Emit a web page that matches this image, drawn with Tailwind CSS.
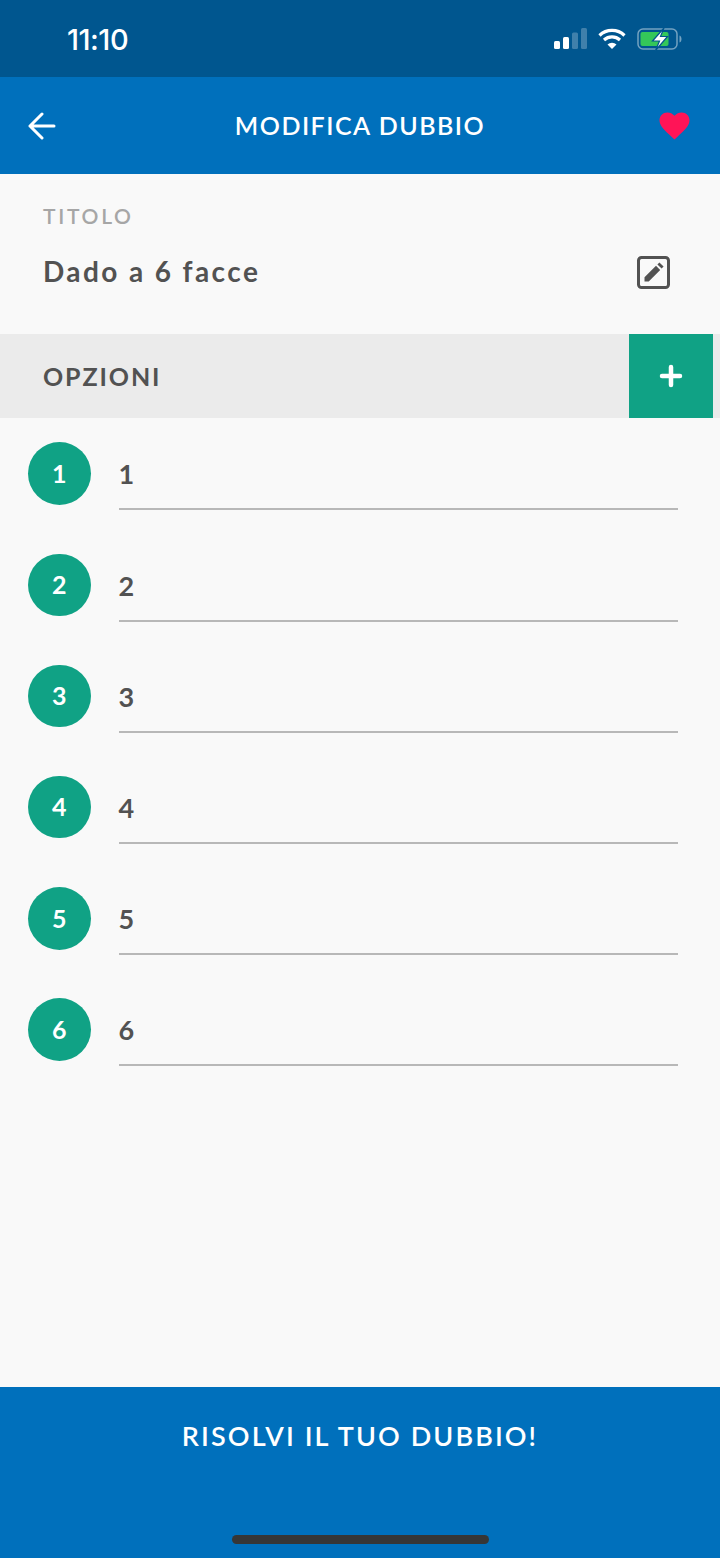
<!DOCTYPE html>
<html lang="it">
<head>
  <meta charset="UTF-8">
  <title>Modifica dubbio</title>
  <script src="https://cdn.jsdelivr.net/npm/@tailwindcss/browser@4"></script>
</head>
<body class="bg-[#f9f9f9] font-['Lato',sans-serif]">
  <div class="w-[720px] h-[1558px] flex flex-col overflow-hidden">

    <!-- status bar -->
    <div class="h-[77px] bg-[#00568f] flex items-center justify-between pl-[67px] pr-[37px] text-white">
      <span class="mt-[2px] text-[29px] font-['Inter',sans-serif] font-medium tracking-[-0.5px] leading-none">11:10</span>
      <div class="flex items-center gap-[11px]">
        <svg class="-mt-[1px]" width="33" height="21" viewBox="0 0 33 21">
          <rect x="0" y="13" width="6" height="8" rx="1.500" fill="#fff"/>
          <rect x="9" y="9" width="6" height="12" rx="1.500" fill="#fff"/>
          <rect x="18" y="4.500" width="6" height="16.500" rx="1.500" fill="#fff" fill-opacity=".25"/>
          <rect x="27" y="0" width="6" height="21" rx="1.500" fill="#fff" fill-opacity=".25"/>
        </svg>
        <svg class="-mt-[1px]" width="28" height="21" viewBox="0 0 28 21" fill="none" stroke="#fff" stroke-width="3.200">
          <path d="M1.500 7.500a18 18 0 0 1 25 0"/>
          <path d="M6 12a12 12 0 0 1 16 0"/>
          <path d="M14 21l-4.500-4.500a6.500 6.500 0 0 1 9 0z" fill="#fff" stroke="none"/>
        </svg>
        <svg width="46" height="24" viewBox="0 0 46 24" fill="none">
          <rect x="1" y="2" width="39" height="20" rx="5" stroke="#fff" stroke-opacity=".45" stroke-width="1.500"/>
          <rect x="3.500" y="5" width="28" height="14" rx="2" fill="#34c759"/>
          <path d="M42.500 8.500c1.500.5 2 2 2 3.500s-.5 3-2 3.500z" fill="#fff" fill-opacity=".45"/>
          <path d="M27 1L15.500 14h7l-4 9.500L30.500 9.500h-7z" fill="#fff" stroke="#00568f" stroke-width="1.200"/>
        </svg>
      </div>
    </div>

    <!-- header -->
    <div class="relative h-[97px] bg-[#0070bc] flex items-center justify-between pl-[28px] pr-[30px]">
      <svg width="28" height="28" viewBox="0 0 28 28" fill="none" stroke="#fff" stroke-width="3" stroke-linecap="round" stroke-linejoin="round">
        <path d="M2 14h24M14 2L2 14l12 12"/>
      </svg>
      <h1 class="absolute inset-x-0 text-center text-white text-[25px] font-semibold tracking-[1.500px] leading-none">MODIFICA DUBBIO</h1>
      <svg width="31" height="28" viewBox="0 0 31 28">
        <path d="M15.500 27.500L13.300 25.500C5.400 18.300.500 13.800.500 8.300.500 3.800 4 .500 8.400.500c2.600 0 5.200 1.200 7.100 3.300C17.400 1.700 20 .500 22.600.500c4.400 0 7.900 3.300 7.900 7.800 0 5.500-4.900 10-12.800 17.200z" fill="#ff1457"/>
      </svg>
    </div>

    <!-- titolo -->
    <div class="h-[160px] pl-[43px] pr-[50px] pt-[30px] flex justify-between items-start">
      <div>
        <p class="text-[21px] font-semibold tracking-[2.700px] text-[#a6a6a6] leading-[25px] -mt-[1px]">TITOLO</p>
        <p class="mt-[27px] text-[28px] font-bold tracking-[2.400px] text-[#525252] leading-[32px]">Dado a 6 facce</p>
      </div>
      <svg class="mt-[52px]" width="33" height="33" viewBox="0 0 33 33" fill="none">
        <rect x="1.500" y="1.500" width="30" height="30" rx="3" stroke="#525252" stroke-width="3"/>
        <path d="M7.500 25.500v-4.200L19 9.800l4.200 4.200L11.700 25.500zM20.400 8.400l2-2 4.200 4.200-2 2z" fill="#525252"/>
      </svg>
    </div>

    <!-- opzioni -->
    <div class="h-[84px] bg-[#ebebeb] flex items-center justify-between pl-[43px] pr-[7px]">
      <span class="mt-[2px] text-[25px] font-bold tracking-[1.900px] text-[#525252]">OPZIONI</span>
      <div class="w-[84px] h-[84px] bg-[#10a285] flex items-center justify-center">
        <svg width="24" height="24" viewBox="0 0 24 24" stroke="#fff" stroke-width="4.500" stroke-linecap="round">
          <path d="M12 3v18M3 12h18"/>
        </svg>
      </div>
    </div>

    <!-- lista opzioni -->
    <ul class="flex-1 pt-[24.400px] pl-[28px] pr-[42px]">
      <li class="h-[111.2px] flex gap-[28px]">
        <div class="w-[62.500px] h-[62.500px] rounded-full bg-[#10a285] text-white text-[25px] font-bold flex items-center justify-center">1</div>
        <div class="flex-1 h-[68px] border-b-2 border-[#b8b8b8] text-[27px] font-bold text-[#525252] leading-[64px]">1</div>
      </li>
      <li class="h-[111.2px] flex gap-[28px]">
        <div class="w-[62.500px] h-[62.500px] rounded-full bg-[#10a285] text-white text-[25px] font-bold flex items-center justify-center">2</div>
        <div class="flex-1 h-[68px] border-b-2 border-[#b8b8b8] text-[27px] font-bold text-[#525252] leading-[64px]">2</div>
      </li>
      <li class="h-[111.2px] flex gap-[28px]">
        <div class="w-[62.500px] h-[62.500px] rounded-full bg-[#10a285] text-white text-[25px] font-bold flex items-center justify-center">3</div>
        <div class="flex-1 h-[68px] border-b-2 border-[#b8b8b8] text-[27px] font-bold text-[#525252] leading-[64px]">3</div>
      </li>
      <li class="h-[111.2px] flex gap-[28px]">
        <div class="w-[62.500px] h-[62.500px] rounded-full bg-[#10a285] text-white text-[25px] font-bold flex items-center justify-center">4</div>
        <div class="flex-1 h-[68px] border-b-2 border-[#b8b8b8] text-[27px] font-bold text-[#525252] leading-[64px]">4</div>
      </li>
      <li class="h-[111.2px] flex gap-[28px]">
        <div class="w-[62.500px] h-[62.500px] rounded-full bg-[#10a285] text-white text-[25px] font-bold flex items-center justify-center">5</div>
        <div class="flex-1 h-[68px] border-b-2 border-[#b8b8b8] text-[27px] font-bold text-[#525252] leading-[64px]">5</div>
      </li>
      <li class="h-[111.2px] flex gap-[28px]">
        <div class="w-[62.500px] h-[62.500px] rounded-full bg-[#10a285] text-white text-[25px] font-bold flex items-center justify-center">6</div>
        <div class="flex-1 h-[68px] border-b-2 border-[#b8b8b8] text-[27px] font-bold text-[#525252] leading-[64px]">6</div>
      </li>
    </ul>

    <!-- footer -->
    <div class="h-[171px] bg-[#0070bc] flex flex-col items-center">
      <p class="mt-[32px] text-white text-[27px] font-semibold tracking-[2.100px] leading-[34px]">RISOLVI IL TUO DUBBIO!</p>
      <div class="mt-[82px] w-[257px] h-[9px] rounded-full bg-[#363636]"></div>
    </div>
  </div>
</body>
</html>
